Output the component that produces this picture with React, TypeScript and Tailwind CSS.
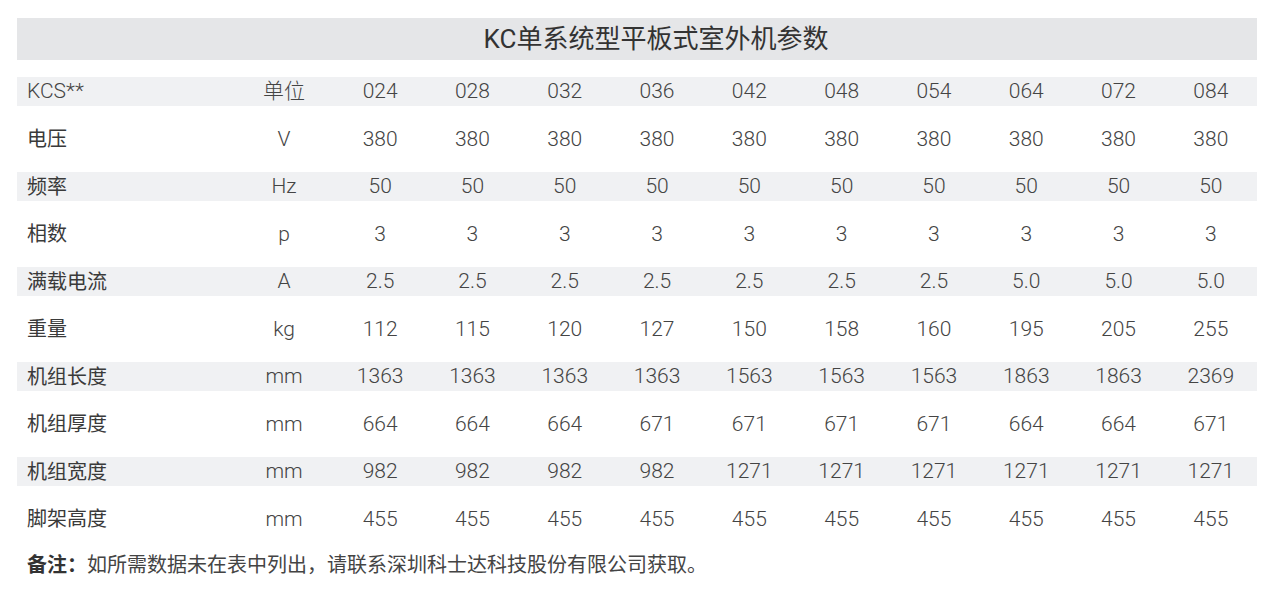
const models = ['024', '028', '032', '036', '042', '048', '054', '064', '072', '084'];

const rows: { label: string; unit: string; values: string[] }[] = [
  { label: 'KCS**', unit: '单位', values: models },
  { label: '电压', unit: 'V', values: Array(10).fill('380') },
  { label: '频率', unit: 'Hz', values: Array(10).fill('50') },
  { label: '相数', unit: 'p', values: Array(10).fill('3') },
  { label: '满载电流', unit: 'A', values: ['2.5', '2.5', '2.5', '2.5', '2.5', '2.5', '2.5', '5.0', '5.0', '5.0'] },
  { label: '重量', unit: 'kg', values: ['112', '115', '120', '127', '150', '158', '160', '195', '205', '255'] },
  { label: '机组长度', unit: 'mm', values: ['1363', '1363', '1363', '1363', '1563', '1563', '1563', '1863', '1863', '2369'] },
  { label: '机组厚度', unit: 'mm', values: ['664', '664', '664', '671', '671', '671', '671', '664', '664', '671'] },
  { label: '机组宽度', unit: 'mm', values: ['982', '982', '982', '982', '1271', '1271', '1271', '1271', '1271', '1271'] },
  { label: '脚架高度', unit: 'mm', values: Array(10).fill('455') },
];

const font = { fontFamily: 'Roboto, "Noto Sans CJK SC", sans-serif' };

export default function App() {
  return (
    <div className="w-[1276px] h-[603px] bg-white pl-[17px] pr-[19px] pt-[18px] text-[#444]" style={font}>
      {/* Title */}
      <div className="h-[42px] bg-[#e5e6e8] flex items-center justify-center pl-[38px] text-[26px] text-[#333] leading-none">
        KC单系统型平板式室外机参数
      </div>

      {/* Table */}
      <div className="mt-[17px] flex flex-col gap-[18.5px]">
        {rows.map((row, i) => (
          <div
            key={row.label}
            className={
              'grid grid-cols-[217px_100px_repeat(10,1fr)] h-[29px] items-center text-[21px] leading-none ' +
              (i % 2 === 0 ? 'bg-[#f0f1f3]' : '')
            }
          >
            <div className={'pl-[10px] text-[20px] text-[#3a3a3a] ' + (i === 0 ? 'font-light text-[21px] text-[#444]' : '')}>
              {row.label}
            </div>
            <div className="text-center font-light">{row.unit}</div>
            {row.values.map((v, j) => (
              <div key={j} className="text-center font-light">
                {v}
              </div>
            ))}
          </div>
        ))}
      </div>

      {/* Note */}
      <div className="mt-[17px] pl-[10px] text-[20px] leading-[28px] text-[#444]">
        <span className="font-bold text-[#333]">备注：</span>如所需数据未在表中列出，请联系深圳科士达科技股份有限公司获取。
      </div>
    </div>
  );
}
